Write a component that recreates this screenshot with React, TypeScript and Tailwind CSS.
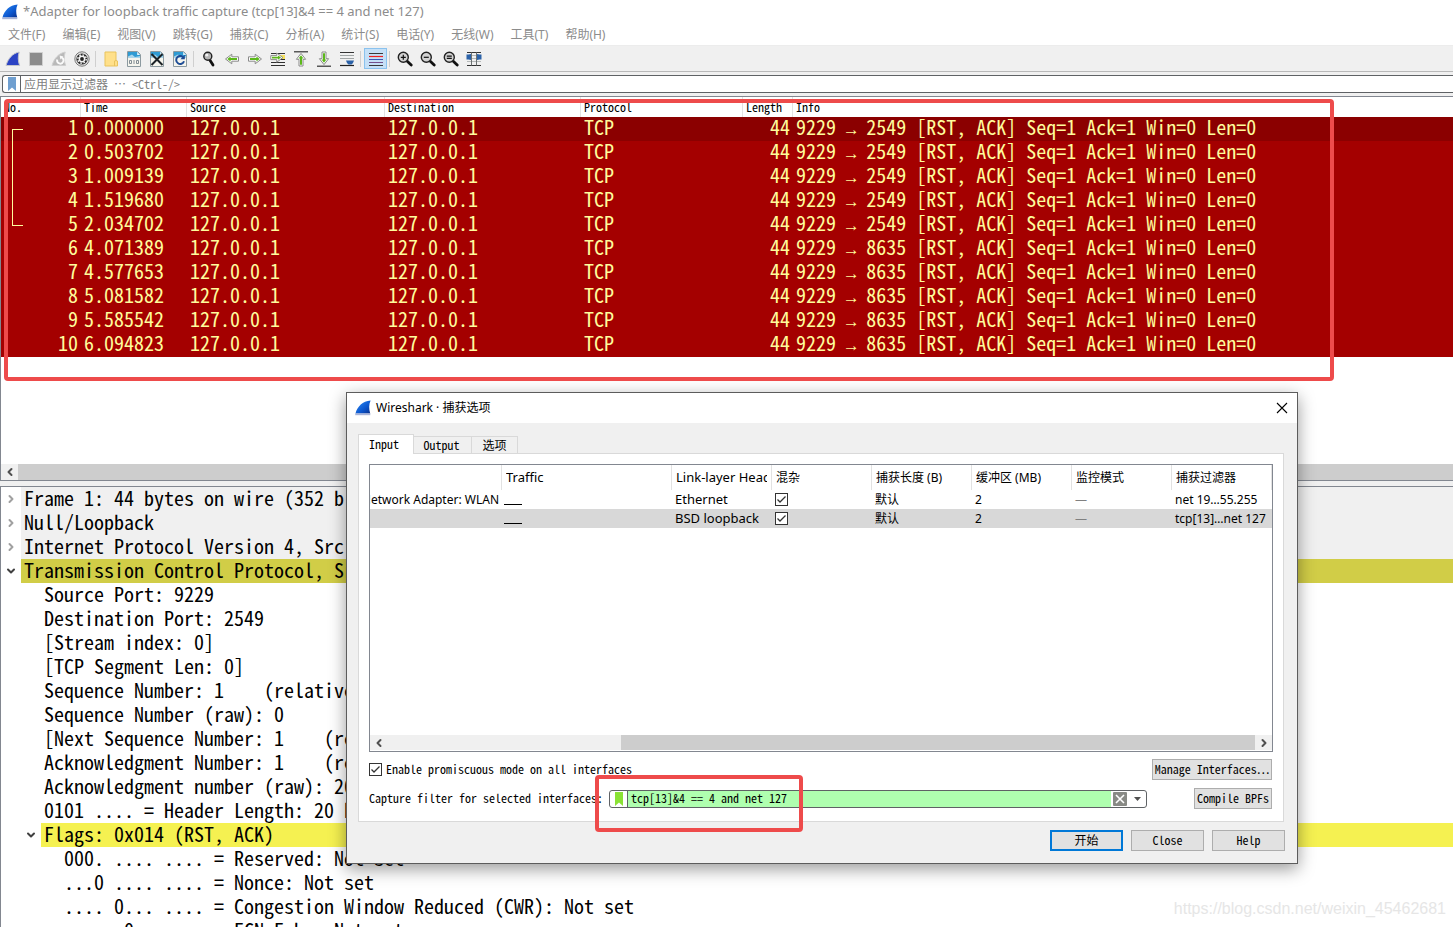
import { useState } from "react";
import type { ReactNode } from "react";
import { ChevronDown, ChevronLeft, ChevronRight } from "lucide-react";
import clsx from "clsx";

const UI = "font-['Noto_Sans','Noto_Sans_CJK_SC',sans-serif]";
const MONO = "font-['Noto_Sans_Mono_CJK_SC','Liberation_Mono','Noto_Sans_CJK_SC',monospace]";

const MENUS = [
  "文件(F)",
  "编辑(E)",
  "视图(V)",
  "跳转(G)",
  "捕获(C)",
  "分析(A)",
  "统计(S)",
  "电话(Y)",
  "无线(W)",
  "工具(T)",
  "帮助(H)",
];

const PACKETS = [
  { time: "0.000000", port: 2549 },
  { time: "0.503702", port: 2549 },
  { time: "1.009139", port: 2549 },
  { time: "1.519680", port: 2549 },
  { time: "2.034702", port: 2549 },
  { time: "4.071389", port: 8635 },
  { time: "4.577653", port: 8635 },
  { time: "5.081582", port: 8635 },
  { time: "5.585542", port: 8635 },
  { time: "6.094823", port: 8635 },
];

type DetailRow = {
  level: 0 | 1 | 2;
  text: string;
  state?: "open" | "closed";
  tone?: "gray" | "olive" | "yellow";
};

const DETAILS: DetailRow[] = [
  { level: 0, text: "Frame 1: 44 bytes on wire (352 bits)", state: "closed", tone: "gray" },
  { level: 0, text: "Null/Loopback", state: "closed", tone: "gray" },
  { level: 0, text: "Internet Protocol Version 4, Src: 127.0.0.1", state: "closed", tone: "gray" },
  { level: 0, text: "Transmission Control Protocol, Src Port: 9229", state: "open", tone: "olive" },
  { level: 1, text: "Source Port: 9229" },
  { level: 1, text: "Destination Port: 2549" },
  { level: 1, text: "[Stream index: 0]" },
  { level: 1, text: "[TCP Segment Len: 0]" },
  { level: 1, text: "Sequence Number: 1    (relative sequence number)" },
  { level: 1, text: "Sequence Number (raw): 0" },
  { level: 1, text: "[Next Sequence Number: 1    (relative sequence number)]" },
  { level: 1, text: "Acknowledgment Number: 1    (relative ack number)" },
  { level: 1, text: "Acknowledgment number (raw): 20" },
  { level: 1, text: "0101 .... = Header Length: 20 bytes (5)" },
  { level: 1, text: "Flags: 0x014 (RST, ACK)", state: "open", tone: "yellow" },
  { level: 2, text: "000. .... .... = Reserved: Not set" },
  { level: 2, text: "...0 .... .... = Nonce: Not set" },
  { level: 2, text: ".... 0... .... = Congestion Window Reduced (CWR): Not set" },
  { level: 2, text: ".... .0.. .... = ECN-Echo: Not set" },
];

/* ---------- icons ---------- */

function Svg({ children }: { children: ReactNode }) {
  return (
    <svg width="16" height="16" viewBox="0 0 16 16" fill="none" aria-hidden="true">
      {children}
    </svg>
  );
}

function AppFin() {
  return (
    <Svg>
      <defs>
        <linearGradient id="fin" x1="0" y1="0" x2="1" y2="1">
          <stop offset="0" stopColor="#2f8df5" />
          <stop offset="0.6" stopColor="#0b57cf" />
          <stop offset="1" stopColor="#0a2f8a" />
        </linearGradient>
      </defs>
      <path d="M0.5 13.5C2.5 6.5 7.5 1.2 15.6 0.6C13.8 4.5 13.8 9 15.2 13.5Z" fill="url(#fin)" />
      <path d="M0.2 13.4H15.3V15.2H0.2Z" fill="#a9b4d8" />
    </Svg>
  );
}

function StartIcon() {
  return (
    <Svg>
      <path d="M1 14.5C3 8 7 2.5 14.2 1C12.8 5.5 13 10 14.6 14.5Z" fill="#2b43c4" stroke="#c3c5cc" />
    </Svg>
  );
}

function StopIcon() {
  return (
    <Svg>
      <path d="M1.5 1.5H14.5V14.5H1.5Z" fill="#8c8c8c" stroke="#cfcfcf" />
    </Svg>
  );
}

function RestartIcon() {
  return (
    <Svg>
      <path d="M1 14.5C3 8 7 2.5 14.2 1C12.8 5.5 13 10 14.6 14.5Z" fill="#b9b9b9" stroke="#d0d0d0" />
      <path d="M10.8 6.6A3.2 3.2 0 1 1 6.2 8.6" stroke="#fafafa" strokeWidth="1.8" />
      <path d="M8.6 4.4L12.4 5.4L9.4 8.4Z" fill="#fafafa" />
    </Svg>
  );
}

function OptionsIcon() {
  return (
    <Svg>
      <circle cx="8" cy="8" r="7.2" fill="#e6e6e6" stroke="#7a7a7a" />
      <circle cx="8" cy="8" r="5.6" fill="#2a2a2a" />
      <circle cx="8" cy="8" r="3.4" fill="#f4f4f4" />
      <circle cx="8" cy="8" r="4.2" stroke="#f4f4f4" strokeWidth="1.4" strokeDasharray="1.6 1.7" />
      <circle cx="8" cy="8" r="1.9" fill="#222" />
    </Svg>
  );
}

function FolderIcon() {
  return (
    <Svg>
      <path d="M2 1H13V9.5L14.5 10V15H2Z" fill="#ffe08a" stroke="#e9c35c" />
      <path d="M11.5 15V10L13 9.5" stroke="#e9c35c" />
    </Svg>
  );
}

function FileSheet({ children }: { children: ReactNode }) {
  return (
    <Svg>
      <path d="M1.5 0.5H11.5L14.5 3.5V15.5H1.5Z" fill="#f5f5ee" stroke="#8c9aa0" />
      <path d="M2 1H11.2L14 3.8V7H2Z" fill="#2f9bd3" />
      <path d="M2 7V5.5L6 3.5L9 6L14 5V7Z" fill="#a9d6ec" />
      <path d="M11.2 1V4H14Z" fill="#e8f4fa" />
      {children}
    </Svg>
  );
}

function FindIcon() {
  return (
    <Svg>
      <path d="M8.5 8.5L12 14" stroke="#111" strokeWidth="2.8" strokeLinecap="round" />
      <circle cx="6.8" cy="5.2" r="4" fill="#b5b5b5" stroke="#222" strokeWidth="1.4" />
      <circle cx="5.8" cy="4.2" r="1.4" fill="#f2f2f2" />
    </Svg>
  );
}

function ArrowIcon({ rotate }: { rotate: 0 | 180 }) {
  return (
    <Svg>
      <g transform={`rotate(${rotate} 8 8)`}>
        <path d="M1.5 5.8H8.2V3.2L14.5 8L8.2 12.8V10.2H1.5Z" fill="#fff" stroke="#8a8a8a" />
        <path d="M3 7H9.4V5.4L12.8 8L9.4 10.6V9H3Z" fill="#5cb81a" />
      </g>
    </Svg>
  );
}

function GotoIcon() {
  return (
    <Svg>
      <path d="M1 2.5H15M9 8.5H15M1 11.5H15M1 14.5H15" stroke="#303030" strokeWidth="1.2" />
      <path d="M10 4H15V8H10Z" fill="#f6e15b" />
      <path d="M0.8 4.6H6.8V2L12.8 6.6L6.8 11.2V8.6H0.8Z" fill="#fff" stroke="#8a8a8a" />
      <path d="M2 5.8H8V4.4L11 6.6L8 8.8V7.4H2Z" fill="#5cb81a" />
    </Svg>
  );
}

function EdgeIcon({ down }: { down?: boolean }) {
  return (
    <Svg>
      <g transform={down ? "rotate(180 8 8)" : undefined}>
        <path d="M1 0.8H15" stroke="#333" strokeWidth="1.2" />
        <path d="M6 15V8.3H3.4L8 2.4L12.6 8.3H10V15Z" fill="#fff" stroke="#8a8a8a" />
        <path d="M7 13.8V7.4H5.6L8 4.2L10.4 7.4H9V13.8Z" fill="#5cb81a" />
      </g>
    </Svg>
  );
}

function AutoScrollIcon() {
  return (
    <Svg>
      <path d="M1 1.5H15" stroke="#333" />
      <path d="M1 4.5H15M1 7.5H15" stroke="#a0a5a5" />
      <path d="M1 14.5H15" stroke="#222" strokeWidth="1.2" />
      <path d="M7 9.5H15L14 12L12.5 13.4H9.5L8 12Z" fill="#2b62a8" />
    </Svg>
  );
}

function ColorizeIcon() {
  return (
    <Svg>
      <path d="M1 2.5H15" stroke="#3a3a3a" />
      <path d="M1 5.5H15" stroke="#f02020" strokeWidth="1.2" />
      <path d="M1 8.5H15" stroke="#3a57b8" />
      <path d="M1 11.5H15" stroke="#74508c" />
      <path d="M1 14.5H15" stroke="#3a3a3a" />
    </Svg>
  );
}

function ZoomIcon({ sign }: { sign: string }) {
  return (
    <Svg>
      <path d="M10 10L14.2 14" stroke="#111" strokeWidth="2.8" strokeLinecap="round" />
      <circle cx="6.3" cy="6.3" r="5" fill="#d2d2d2" stroke="#222" strokeWidth="1.4" />
      <path d={sign} stroke="#111" strokeWidth="1.2" />
    </Svg>
  );
}

function ResizeIcon() {
  return (
    <Svg>
      <path d="M1 1.5H15" stroke="#333" />
      <path d="M1 4.5H15M1 7.5H15M1 10.5H15" stroke="#b4b8b8" />
      <path d="M1 14.5H15" stroke="#333" />
      <path d="M5.5 1.5V14.5M10.5 1.5V14.5" stroke="#6d7272" />
      <path d="M0.5 3.5H2.5L5 3V9L2.5 8.5H0.5Z" fill="#2b62a8" />
      <path d="M15.5 3.5H13.5L11 3V9L13.5 8.5H15.5Z" fill="#2b62a8" />
    </Svg>
  );
}

function BookmarkIcon({ color }: { color: string }) {
  return (
    <svg width="8" height="14" viewBox="0 0 8 14" aria-hidden="true">
      <path d="M0 0H8V14L4 10.5L0 14Z" fill={color} />
    </svg>
  );
}

/* ---------- main window ---------- */

const TOOL_GROUPS: { label: string; icon: ReactNode; active?: boolean }[][] = [
  [
    { label: "Start", icon: <StartIcon /> },
    { label: "Stop", icon: <StopIcon /> },
    { label: "Restart", icon: <RestartIcon /> },
    { label: "Options", icon: <OptionsIcon /> },
  ],
  [
    { label: "Open", icon: <FolderIcon /> },
    {
      label: "Save",
      icon: (
        <FileSheet>
          <path
            d="M3.5 9.5H5.5V12.5H3.5ZM8 9V13M10.5 9.5H12.5V12.5H10.5Z"
            stroke="#76828a"
            strokeWidth="0.9"
          />
        </FileSheet>
      ),
    },
    {
      label: "Close file",
      icon: (
        <FileSheet>
          <path d="M2.5 3L13.5 14M13.5 3L2.5 14" stroke="#1c2226" strokeWidth="2" />
        </FileSheet>
      ),
    },
    {
      label: "Reload",
      icon: (
        <FileSheet>
          <path d="M11.8 7.2A4 4 0 1 0 12 10.2" stroke="#1d4c96" strokeWidth="2" />
          <path d="M12.8 3.8V8.2H8.4Z" fill="#1d4c96" />
        </FileSheet>
      ),
    },
  ],
  [
    { label: "Find", icon: <FindIcon /> },
    { label: "Previous", icon: <ArrowIcon rotate={180} /> },
    { label: "Next", icon: <ArrowIcon rotate={0} /> },
    { label: "Go to packet", icon: <GotoIcon /> },
    { label: "First packet", icon: <EdgeIcon /> },
    { label: "Last packet", icon: <EdgeIcon down /> },
    { label: "Auto scroll", icon: <AutoScrollIcon /> },
  ],
  [{ label: "Colorize", icon: <ColorizeIcon />, active: true }],
  [
    { label: "Zoom in", icon: <ZoomIcon sign="M3.8 6.3H8.8M6.3 3.8V8.8" /> },
    { label: "Zoom out", icon: <ZoomIcon sign="M3.8 6.3H8.8" /> },
    { label: "Normal size", icon: <ZoomIcon sign="M3.8 5.2H8.8M3.8 7.4H8.8" /> },
    { label: "Resize columns", icon: <ResizeIcon /> },
  ],
];

function Toolbar() {
  return (
    <div className="flex h-[27px] shrink-0 items-center border-t border-b border-t-[#ececec] border-b-[#b8b8b8] bg-[#f0f0f0] pl-px">
      {TOOL_GROUPS.map((group, i) => (
        <div key={i} className="flex items-center">
          {i > 0 && <span className="mr-[3px] ml-[2px] h-4 w-px bg-[#cfcfcf]" />}
          {group.map((tool) => (
            <button
              key={tool.label}
              aria-label={tool.label}
              className={clsx(
                "flex h-[21px] w-[23px] items-center justify-center",
                tool.active && "border border-[#8ac2ee] bg-[#c5e0f7]"
              )}
            >
              {tool.icon}
            </button>
          ))}
        </div>
      ))}
    </div>
  );
}

function PacketList() {
  const heads = ["No.", "Time", "Source", "Destination", "Protocol", "Length", "Info"];
  return (
    <section className="flex shrink-0 basis-[385px] flex-col border border-r-0 border-[#828790] bg-white">
      <div className="relative">
        <table className={clsx("w-full table-fixed border-separate border-spacing-0 text-left", MONO)}>
          <colgroup>
            <col className="w-[80px]" />
            <col className="w-[106px]" />
            <col className="w-[198px]" />
            <col className="w-[196px]" />
            <col className="w-[162px]" />
            <col className="w-[50px]" />
            <col />
          </colgroup>
          <thead>
            <tr className="h-5 text-[12px] leading-5">
              {heads.map((h) => (
                <th key={h} className="border-r border-[#e2e2e2] p-0 pl-[3px] font-normal last:border-r-0">
                  {h}
                </th>
              ))}
            </tr>
          </thead>
          <tbody>
            {PACKETS.map((p, i) => (
              <tr
                key={p.time}
                className={clsx(
                  "h-6 text-[20px] leading-5 whitespace-nowrap text-[#fffc9c]",
                  i === 0 ? "bg-[#8b0000]" : "bg-[#a40000]"
                )}
              >
                <td className="p-0 pr-[3px] pb-1 text-right">{i + 1}</td>
                <td className="p-0 pb-1 pl-[3px]">{p.time}</td>
                <td className="p-0 pb-1 pl-[3px]">127.0.0.1</td>
                <td className="p-0 pb-1 pl-[3px]">127.0.0.1</td>
                <td className="p-0 pb-1 pl-[3px]">TCP</td>
                <td className="p-0 pr-[3px] pb-1 text-right">44</td>
                <td className="p-0 pb-1 pl-[3px]">
                  9229 <span className="font-['Liberation_Mono',monospace] text-[17px] leading-[0]">→</span> {p.port}{" "}
                  [RST, ACK] Seq=1 Ack=1 Win=0 Len=0
                </td>
              </tr>
            ))}
          </tbody>
        </table>
        {/* conversation bracket over packets 1 to 5 */}
        <span className="absolute top-8 left-[11px] h-[97px] w-[11px] border border-r-0 border-[#fffc9c]" />
      </div>
      <div className="mt-auto flex h-4 bg-[#cdcdcd]">
        <button aria-label="Scroll left" className="flex w-[17px] items-center justify-center bg-[#f0f0f0]">
          <ChevronLeft className="h-3 w-3 text-[#505050]" strokeWidth={4} />
        </button>
      </div>
    </section>
  );
}

function PacketDetails() {
  return (
    <section className="mt-[5px] min-h-0 flex-1 overflow-hidden border-t border-l border-[#828790] bg-white">
      <ul className={clsx("text-[20px] leading-[22px] whitespace-pre text-black", MONO)}>
        {DETAILS.map((row) => (
          <li key={row.text} className={clsx("flex h-6", row.level === 1 && "pl-5", row.level === 2 && "pl-10")}>
            <span className="flex w-5 shrink-0 items-center justify-center">
              {row.state === "closed" && <ChevronRight className="h-3 w-3 text-[#a0a0a0]" strokeWidth={4} />}
              {row.state === "open" && <ChevronDown className="h-3 w-3 text-[#404040]" strokeWidth={4} />}
            </span>
            <span
              className={clsx(
                "flex-1 pl-[3px]",
                row.tone === "gray" && "bg-[#f0f0f0]",
                row.tone === "olive" && "bg-[#d1cd47]",
                row.tone === "yellow" && "bg-[#f5f151]"
              )}
            >
              {row.text}
            </span>
          </li>
        ))}
      </ul>
    </section>
  );
}

/* ---------- capture options dialog ---------- */

function CheckBox({ id, label }: { id: string; label?: string }) {
  const [on, setOn] = useState(true);
  return (
    <span className="relative flex h-[13px] w-[13px] shrink-0">
      <input
        id={id}
        type="checkbox"
        aria-label={label}
        checked={on}
        onChange={() => setOn(!on)}
        className="h-[13px] w-[13px] appearance-none border border-[#333] bg-white"
      />
      {on && (
        <svg className="pointer-events-none absolute inset-0" width="13" height="13" viewBox="0 0 13 13" fill="none">
          <path d="M2.5 6.5L5 9L10.5 3.5" stroke="#333" strokeWidth="1.3" />
        </svg>
      )}
    </span>
  );
}

function PushButton({ children, className }: { children: ReactNode; className?: string }) {
  return (
    <button
      className={clsx(
        "flex h-[21px] items-center justify-center whitespace-nowrap bg-[#e1e1e1] pb-0.5",
        className
      )}
    >
      {children}
    </button>
  );
}

const INTERFACES = [
  { name: "Network Adapter: WLAN", link: "Ethernet", filter: "net 19…55.255" },
  { name: "", link: "BSD loopback", filter: "tcp[13]…net 127" },
];

function InterfaceTable() {
  const heads = ["", "Traffic", "Link-layer Header", "混杂", "捕获长度 (B)", "缓冲区 (MB)", "监控模式", "捕获过滤器"];
  return (
    <div className="flex h-[288px] flex-col border border-[#828790] bg-white">
      <table className={clsx("w-full table-fixed border-separate border-spacing-0 text-left text-[12px]", UI)}>
        <colgroup>
          <col className="w-[132px]" />
          <col className="w-[170px]" />
          <col className="w-[100px]" />
          <col className="w-[100px]" />
          <col className="w-[100px]" />
          <col className="w-[100px]" />
          <col className="w-[100px]" />
          <col />
        </colgroup>
        <thead>
          <tr className="h-[25px]">
            {heads.map((h, i) => (
              <th
                key={i}
                className={clsx(
                  "border-r border-[#e2e2e2] p-0 px-1 font-normal whitespace-nowrap",
                  (i === 1 || i === 2) && "text-[13px]"
                )}
              >
                <div className="overflow-hidden">{h}</div>
              </th>
            ))}
          </tr>
        </thead>
        <tbody>
          {INTERFACES.map((row, i) => (
            <tr key={row.link} className={clsx("h-[19px] leading-[19px] whitespace-nowrap", i === 1 && "bg-[#d8d8d8]")}>
              <td className="p-0">
                <div className="flex justify-end overflow-hidden pr-[3px]">{row.name}</div>
              </td>
              <td className="p-0 pl-[2px]">
                <svg width="18" height="10" viewBox="0 0 18 10" aria-hidden="true">
                  <path d="M0 9.5H18" stroke="#000" />
                </svg>
              </td>
              <td className="p-0 pl-[3px] text-[13px]">{row.link}</td>
              <td className="p-0 pl-[3px]">
                <CheckBox id={`promisc-${i}`} label={`${row.link} promiscuous`} />
              </td>
              <td className="p-0 pl-[3px]">默认</td>
              <td className="p-0 pl-[3px]">2</td>
              <td className="p-0 pl-[3px] text-[#808080]">—</td>
              <td className="p-0 pl-[3px]">{row.filter}</td>
            </tr>
          ))}
        </tbody>
      </table>
      <div className="mt-auto mb-px flex h-[15px] bg-[#f0f0f0]">
        <button aria-label="Scroll left" className="flex w-[17px] items-center justify-center">
          <ChevronLeft className="h-3 w-3 text-[#505050]" strokeWidth={4} />
        </button>
        <div className="flex flex-1 justify-end">
          <div className="w-[73%] bg-[#cdcdcd]" />
        </div>
        <button aria-label="Scroll right" className="flex w-[17px] items-center justify-center">
          <ChevronRight className="h-3 w-3 text-[#505050]" strokeWidth={4} />
        </button>
      </div>
    </div>
  );
}

function CaptureDialog() {
  const [filter, setFilter] = useState("tcp[13]&4 == 4 and net 127");
  return (
    <div
      role="dialog"
      aria-label="Wireshark · 捕获选项"
      className={clsx(
        "absolute top-[392px] left-[346px] w-[952px] border border-[#5c5c5c] bg-[#f0f0f0] text-[12px] text-black shadow-[0_5px_16px_rgba(0,0,0,0.4)]",
        MONO
      )}
    >
      <header className={clsx("flex h-[30px] items-center bg-white pl-2", UI)}>
        <AppFin />
        <h2 className="ml-[5px]">Wireshark · 捕获选项</h2>
        <button aria-label="Close window" className="mr-[9px] ml-auto">
          <svg width="12" height="12" viewBox="0 0 12 12" fill="none">
            <path d="M1 1L11 11M11 1L1 11" stroke="#000" strokeWidth="1.1" />
          </svg>
        </button>
      </header>

      <div className="pt-[11px] pr-3 pb-3 pl-[11px]">
        <div role="tablist" className="flex items-end">
          <button
            role="tab"
            aria-selected="true"
            className="z-10 -mb-px flex h-5 w-14 items-center justify-center border border-b-0 border-[#d9d9d9] bg-white pr-1 pb-0.5"
          >
            Input
          </button>
          <button
            role="tab"
            className="flex h-[17px] w-[58px] items-center justify-center border-t border-r border-[#d9d9d9] pr-0.5"
          >
            Output
          </button>
          <button role="tab" className="flex h-[17px] w-[46px] items-center justify-center border-t border-r border-[#d9d9d9]">
            选项
          </button>
        </div>

        <div className="mr-px border border-[#d9d9d9] bg-white px-[10px] pt-[10px] pb-3">
          <InterfaceTable />
          <div className="mt-[7px] flex h-[21px] items-center pr-px">
            <CheckBox id="promisc-all" />
            <label htmlFor="promisc-all" className="ml-1 pb-0.5">
              Enable promiscuous mode on all interfaces
            </label>
            <PushButton className="ml-auto w-[120px] border border-[#adadad]">Manage Interfaces…</PushButton>
          </div>
          <div className="mt-2 flex h-[21px] items-center pr-px">
            <label htmlFor="capture-filter" className="w-[240px] pb-0.5 whitespace-nowrap">
              Capture filter for selected interfaces:
            </label>
            <div className="flex h-[18px] w-[538px] overflow-hidden rounded-[3px] border border-[#5f6265] bg-white">
              <button
                aria-label="Filter bookmarks"
                className="flex w-[18px] shrink-0 items-center justify-center border-r border-[#5f6265]"
              >
                <BookmarkIcon color="#8ae234" />
              </button>
              <input
                id="capture-filter"
                value={filter}
                onChange={(e) => setFilter(e.target.value)}
                className="min-w-0 flex-1 bg-[#afffaf] pb-0.5 pl-[3px] outline-none"
              />
              <button aria-label="Clear filter" onClick={() => setFilter("")} className="flex w-[18px] items-center justify-center">
                <svg width="14" height="14" viewBox="0 0 14 14" fill="none">
                  <rect width="14" height="14" rx="1" fill="#888a85" />
                  <path d="M3 3L11 11M11 3L3 11" stroke="#fff" strokeWidth="1.6" />
                </svg>
              </button>
              <button aria-label="Recent filters" className="flex w-[17px] items-center justify-center">
                <svg width="7" height="4" viewBox="0 0 7 4">
                  <path d="M0 0H7L3.5 4Z" fill="#505050" />
                </svg>
              </button>
            </div>
            <PushButton className="ml-auto w-[78px] border border-[#adadad]">Compile BPFs</PushButton>
          </div>
        </div>

        <div className="mt-2 flex justify-end gap-2">
          <PushButton className="w-[73px] border-2 border-[#0078d7]">开始</PushButton>
          <PushButton className="w-[73px] border border-[#adadad]">Close</PushButton>
          <PushButton className="w-[73px] border border-[#adadad]">Help</PushButton>
        </div>
      </div>
    </div>
  );
}

export default function App() {
  return (
    <div className="relative flex h-screen flex-col overflow-hidden bg-[#f0f0f0]">
      <header className={clsx("shrink-0 bg-white text-[12px] text-[#8c8c8c]", UI)}>
        <div className="flex h-[23px] items-center gap-[5px] pl-[2px]">
          <AppFin />
          <h1 className="text-[13px]">*Adapter for loopback traffic capture (tcp[13]&amp;4 == 4 and net 127)</h1>
        </div>
        <nav className="flex h-[22px] items-center gap-px pt-0.5">
          {MENUS.map((m) => (
            <button key={m} className="px-2">
              {m}
            </button>
          ))}
        </nav>
      </header>

      <Toolbar />

      <div className="flex h-6 shrink-0 items-center pl-[2px]">
        <div className="flex h-[18px] flex-1 rounded-l-[3px] border border-r-0 border-[#5f6265] bg-white">
          <button
            aria-label="Display filter bookmarks"
            className="flex w-[18px] items-center justify-center border-r border-[#5f6265]"
          >
            <BookmarkIcon color="#6f9fd0" />
          </button>
          <input
            aria-label="Display filter"
            placeholder="应用显示过滤器 ⋯ <Ctrl-/>"
            className={clsx("min-w-0 flex-1 pl-[3px] text-[12px] outline-none placeholder:text-[#808080]", MONO)}
          />
        </div>
      </div>

      <PacketList />
      <PacketDetails />

      <p className="absolute right-[7px] bottom-2 font-['Liberation_Sans',sans-serif] text-[16px] leading-5 text-[#e6e6e6]">
        https://blog.csdn.net/weixin_45462681
      </p>

      <CaptureDialog />

      {/* highlight frames */}
      <div className="pointer-events-none absolute top-[99px] left-1 h-[282px] w-[1330px] rounded-sm border-4 border-[#ee4b4b]" />
      <div className="pointer-events-none absolute top-[775px] left-[595px] h-[57px] w-[208px] rounded-sm border-4 border-[#ee4b4b]" />
    </div>
  );
}
